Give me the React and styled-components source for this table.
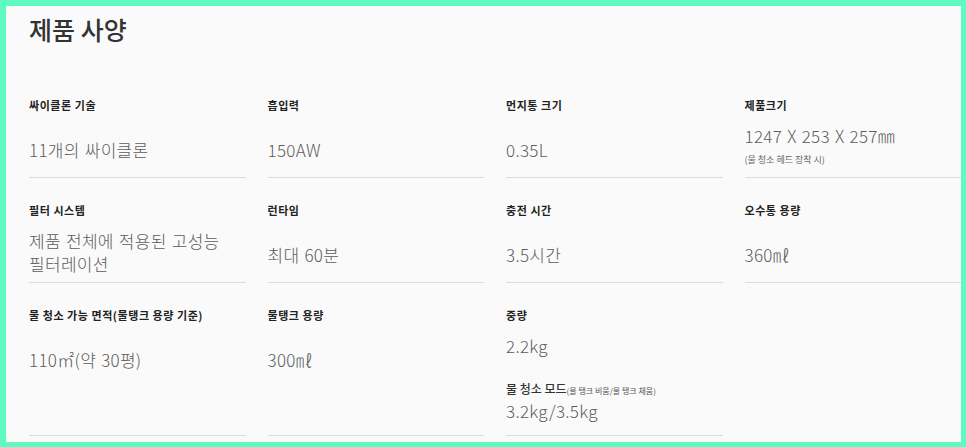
import React from "react";
import styled, { createGlobalStyle } from "styled-components";

const Global = createGlobalStyle`
  html, body { margin: 0; padding: 0; background: #5dfbc1; }
  body { font-family: "Noto Sans CJK KR", "Noto Sans", sans-serif; }
  * { box-sizing: border-box; }
`;

const Frame = styled.div`
  width: 966px;
  height: 447px;
  padding: 6px 5px 5px 6px;
  background: #5dfbc1;
`;

const Panel = styled.div`
  height: 100%;
  background: #fafafa;
  overflow: hidden;
  padding: 6px 0 0 23px;
`;

const Title = styled.h2`
  margin: 0 0 27px;
  font-size: 25px;
  line-height: 34px;
  font-weight: 500;
  color: #333;
  letter-spacing: 0;
`;

const Grid = styled.div`
  display: grid;
  grid-template-columns: repeat(4, 216.5px);
  column-gap: 22px;
`;

const Cell = styled.div`
  display: flex;
  flex-direction: column;
  padding: 24px 0 ${(p) => p.$pb || 3}px;
  border-bottom: ${(p) => (p.$empty ? "none" : "1px solid #dcdcdc")};
`;

const Label = styled.div`
  font-size: 11px;
  line-height: 16px;
  font-weight: 700;
  color: #222;
  letter-spacing: 0.55px;
`;

const SmallNote = styled.span`
  font-size: 8px;
  font-weight: 400;
  color: #555;
  letter-spacing: 0;
`;

const ValueBox = styled.div`
  margin-top: 11px;
  min-height: 50px;
  display: flex;
  flex-direction: column;
  justify-content: ${(p) => (p.$top ? "flex-start" : "center")};
`;

const Value = styled.div`
  font-size: 17px;
  line-height: 23px;
  font-weight: 300;
  color: #5c5c5c;
  letter-spacing: 0.3px;
  word-spacing: 1px;
`;

const Note = styled.div`
  margin-top: 6px;
  font-size: 9px;
  line-height: 14px;
  color: #666;
`;

const SubLabel = styled(Label)`
  margin-top: 24px;
  font-weight: 500;
  font-size: 12px;
  color: #333;
  letter-spacing: 0;
`;

const specs = [
  { label: "싸이클론 기술", value: ["11개의 싸이클론"] },
  { label: "흡입력", value: ["150AW"] },
  { label: "먼지통 크기", value: ["0.35L"] },
  { label: "제품크기", value: ["1247 X 253 X 257㎜"], note: "(물 청소 헤드 장착 시)", top: true },
  { label: "필터 시스템", value: ["제품 전체에 적용된 고성능", "필터레이션"], top: true },
  { label: "런타임", value: ["최대 60분"] },
  { label: "충전 시간", value: ["3.5시간"] },
  { label: "오수통 용량", value: ["360㎖"] },
  { label: "물 청소 가능 면적(물탱크 용량 기준)", value: ["110㎡(약 30평)"] },
  { label: "물탱크 용량", value: ["300㎖"] },
  {
    label: "중량",
    value: ["2.2kg"],
    top: true,
    sub: { label: "물 청소 모드", small: "(물 탱크 비움/물 탱크 채움)", value: "3.2kg/3.5kg" },
    pb: 13,
  },
  { empty: true },
];

export default function App() {
  return (
    <>
      <Global />
      <Frame>
        <Panel>
          <Title>제품 사양</Title>
          <Grid>
            {specs.map((s, i) =>
              s.empty ? (
                <Cell key={i} $empty />
              ) : (
                <Cell key={i} $pb={s.pb}>
                  <Label>{s.label}</Label>
                  <ValueBox $top={s.top}>
                    {s.value.map((v, j) => (
                      <Value key={j}>{v}</Value>
                    ))}
                    {s.note && <Note>{s.note}</Note>}
                    {s.sub && (
                      <>
                        <SubLabel>
                          {s.sub.label}
                          <SmallNote>{s.sub.small}</SmallNote>
                        </SubLabel>
                        <Value>{s.sub.value}</Value>
                      </>
                    )}
                  </ValueBox>
                </Cell>
              )
            )}
          </Grid>
        </Panel>
      </Frame>
    </>
  );
}
